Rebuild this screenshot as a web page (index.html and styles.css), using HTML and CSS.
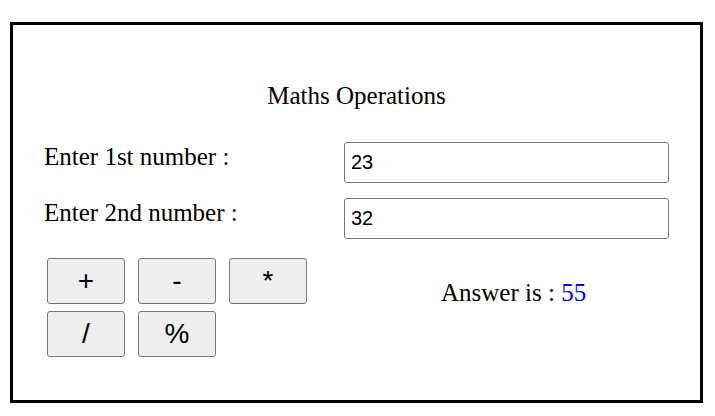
FILE: index.html
```html
<!DOCTYPE html>
<html>
<head>
<meta charset="utf-8">
<link rel="stylesheet" href="styles.css">
</head>
<body>
<div class="calc">
  <h1 class="title">Maths Operations</h1>
  <div class="grid">
    <label class="label" for="n1">Enter 1st number :</label>
    <input class="field" id="n1" type="text" value="23">
    <label class="label" for="n2">Enter 2nd number :</label>
    <input class="field" id="n2" type="text" value="32">
    <div class="ops">
      <button class="op">+</button>
      <button class="op">-</button>
      <button class="op">*</button>
      <button class="op">/</button>
      <button class="op">%</button>
    </div>
    <div class="answer">Answer is : <span class="result">55</span></div>
  </div>
</div>
</body>
</html>
```
FILE: styles.css
```css
html, body { margin: 0; padding: 0; background: #fff; }
body { padding: 22px 12px 0 10px; font-family: "Liberation Serif", "Times New Roman", serif; color: #000; }
.calc {
  width: 687px;
  height: 375px;
  border: 3px solid #000;
  box-sizing: content-box;
}
.title {
  margin: 56px 0 0 0;
  font-size: 25px;
  font-weight: normal;
  text-align: center;
  line-height: 29px;
}
.grid {
  display: grid;
  grid-template-columns: 300px 325px;
  padding: 0 31px;
  margin-top: 32px;
  row-gap: 15px;
}
.label { font-size: 25px; line-height: 29px; }
.field {
  box-sizing: border-box;
  height: 41px;
  width: 325px;
  border: 1px solid #767676;
  border-radius: 3px;
  padding: 0 6px;
  font-family: "Liberation Sans", Arial, sans-serif;
  font-size: 20px;
  color: #000;
  outline: none;
}
.ops {
  display: grid;
  grid-template-columns: repeat(3, 78px);
  column-gap: 13px;
  row-gap: 7px;
  padding-left: 3px;
  margin-top: 4px;
}
.op {
  height: 46px;
  margin: 0;
  background: #efefef;
  border: 1px solid #767676;
  border-radius: 3px;
  font-family: "Liberation Sans", Arial, sans-serif;
  font-size: 28px;
  color: #000;
  padding: 0;
}
.answer {
  font-size: 25px;
  line-height: 29px;
  padding: 24px 0 0 97px;
}
.result { color: #0000ff; }
```
